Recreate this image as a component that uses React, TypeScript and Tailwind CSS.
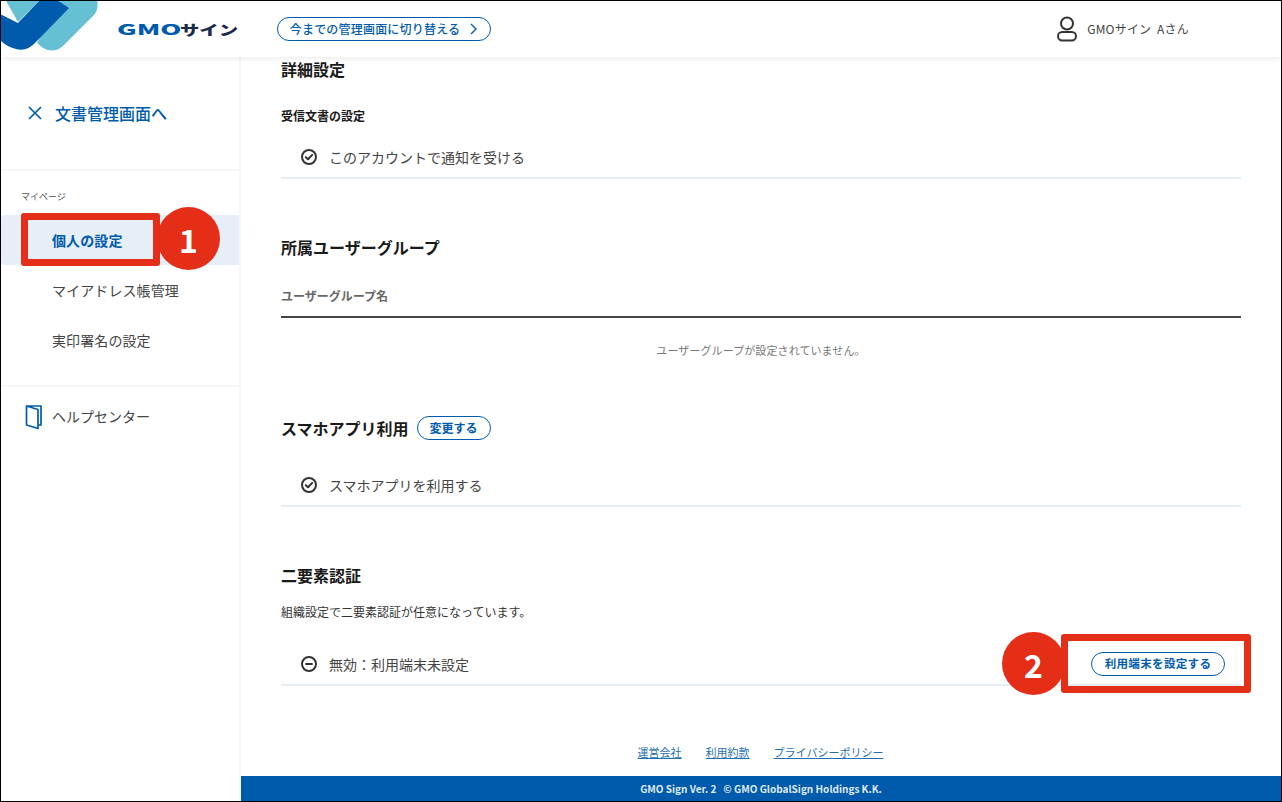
import React from "react";

const JP = "font-['Noto_Sans_CJK_JP','Noto_Sans',sans-serif]";

const CheckCircle = () => (
  <svg width="18" height="18" viewBox="0 0 18 18" fill="none" stroke="#333" strokeWidth="2">
    <circle cx="9" cy="9" r="7" />
    <path d="M5.8 9.2 8 11.3 12.2 6.9" strokeLinecap="round" strokeLinejoin="round" />
  </svg>
);

const MinusCircle = () => (
  <svg width="18" height="18" viewBox="0 0 18 18" fill="none" stroke="#333" strokeWidth="2">
    <circle cx="9" cy="9" r="7" />
    <path d="M5.3 9h7.4" />
  </svg>
);

const StatusRow = ({ icon, text, children }: { icon: React.ReactNode; text: string; children?: React.ReactNode }) => (
  <div className="flex h-[42px] items-center border-b-2 border-[#e6eef5] pl-[19px]">
    {icon}
    <span className="ml-[11px] text-[14px] text-[#444]">{text}</span>
    {children}
  </div>
);

const Pill = ({ children, className }: { children: React.ReactNode; className?: string }) => (
  <button className={`flex items-center justify-center rounded-full border border-[#005bac] bg-white text-[#005bac] ${className}`}>
    {children}
  </button>
);

const Badge = ({ n, className }: { n: number; className: string }) => (
  <div className={`absolute flex h-[63px] w-[63px] items-center justify-center rounded-full bg-[#e42e18] text-[32px] font-bold text-white ${className}`}>
    {n}
  </div>
);

export default function App() {
  return (
    <div className={`relative flex h-[802px] w-[1282px] flex-col overflow-hidden border border-black bg-white ${JP}`}>
      {/* Header */}
      <header className="relative z-10 flex h-[56px] shrink-0 items-center bg-white shadow-[0_2px_6px_rgba(0,0,0,0.07)]">
        <svg className="absolute left-0 top-0" width="100" height="52" viewBox="0 0 100 52">
          <path d="M4 -2 17 21 40 -2Z" fill="#66c0d4" />
          <path d="M60 -2H96Q98 8 93 14L62 45Q53 53 42 47L36 42Z" fill="#66c0d4" />
          <path d="M-1 13 17 22 39 -1H56L68 7 35 41Q26 51 15 48 6 46 -1 39Z" fill="#005bac" />
        </svg>
        <div className="ml-[116px] flex w-[122px] whitespace-nowrap text-[14px] font-black leading-none">
          <span className="w-[63px] origin-left scale-x-[1.92] text-[#005bac]">GMO</span>
          <span className="w-[59px] origin-left scale-x-[1.38] text-[#1c2a4a]">サイン</span>
        </div>
        <Pill className="ml-[38px] h-[24px] w-[214px] gap-[9px] text-[12px] font-medium tracking-[0.2px]">
          今までの管理画面に切り替える
          <svg width="9" height="12" viewBox="0 0 9 12" fill="none" stroke="#005bac" strokeWidth="1.4">
            <path d="M2 1l5 5-5 5" />
          </svg>
        </Pill>
        <div className="ml-auto mr-[92px] flex items-center">
          <svg width="22" height="26" viewBox="0 0 22 26" fill="none" stroke="#333" strokeWidth="2">
            <circle cx="11" cy="7.5" r="6" />
            <rect x="2" y="16" width="18" height="8.5" rx="4.2" />
          </svg>
          <span className="ml-[9px] whitespace-pre text-[12px] tracking-[0.2px] text-[#444]">GMOサイン  Aさん</span>
        </div>
      </header>

      <div className="flex min-h-0 flex-1">
        {/* Sidebar */}
        <aside className="flex w-[240px] shrink-0 flex-col border-r-2 border-[#f5f6f8]">
          <div className="flex h-[114px] shrink-0 items-center border-b-2 border-[#f5f6f8] pl-[26px] pb-[1px]">
            <svg width="16" height="16" viewBox="0 0 16 16" fill="none" stroke="#005bac" strokeWidth="1.7">
              <path d="M2 2l12 12M14 2 2 14" />
            </svg>
            <span className="ml-[12px] text-[16px] font-medium text-[#005bac]">文書管理画面へ</span>
          </div>
          <div className="mt-[19px] pl-[20px] text-[9px] leading-[14px] text-[#555]">マイページ</div>
          <nav className="mt-[11px] flex flex-col text-[14px] tracking-[0.1px] text-[#444]">
            <div className="flex h-[50px] items-center bg-[#e6eff7] pl-[51px] font-bold text-[#005bac]">個人の設定</div>
            <div className="flex h-[50px] items-center pl-[51px]">マイアドレス帳管理</div>
            <div className="flex h-[50px] items-center pl-[51px]">実印署名の設定</div>
          </nav>
          <div className="mt-[20px] flex h-[61px] items-center border-t-2 border-[#f5f6f8] pl-[24px] text-[14px] text-[#444]">
            <svg width="18" height="26" viewBox="0 0 18 26" fill="none" stroke="#005bac" strokeWidth="1.7" strokeLinejoin="round">
              <path d="M1.5 2H16V21H13M1.5 2V21L13 24.5V5.5L1.5 2Z" />
            </svg>
            <span className="ml-[9px]">ヘルプセンター</span>
          </div>
        </aside>

        {/* Main */}
        <main className="flex min-w-0 flex-1 flex-col">
          <div className="flex flex-1 flex-col pl-[40px] pr-[40px]">
            <h2 className="mt-[1px] text-[16px] font-bold leading-[22px] text-[#1a1a1a]">詳細設定</h2>
            <h3 className="mt-[27px] text-[12px] font-bold leading-[18px] text-[#1a1a1a]">受信文書の設定</h3>
            <div className="mt-[12px]">
              <StatusRow icon={<CheckCircle />} text="このアカウントで通知を受ける" />
            </div>

            <h2 className="mt-[57px] text-[16px] font-bold leading-[22px] text-[#1a1a1a]">所属ユーザーグループ</h2>
            <div className="mt-[17px] flex h-[43px] items-center border-b-2 border-[#444] text-[12px] font-bold text-[#666]">
              ユーザーグループ名
            </div>
            <div className="mt-[24px] text-center text-[11px] leading-[16px] tracking-[0.1px] text-[#777]">
              ユーザーグループが設定されていません。
            </div>

            <div className="mt-[58px] flex h-[24px] items-center">
              <h2 className="text-[16px] font-bold text-[#1a1a1a]">スマホアプリ利用</h2>
              <Pill className="ml-[8px] h-[24px] w-[74px] text-[12px] font-bold">変更する</Pill>
            </div>
            <div className="mt-[25px]">
              <StatusRow icon={<CheckCircle />} text="スマホアプリを利用する" />
            </div>

            <h2 className="mt-[57px] text-[16px] font-bold leading-[22px] text-[#1a1a1a]">二要素認証</h2>
            <p className="mt-[17px] text-[12px] leading-[18px] text-[#333]">組織設定で二要素認証が任意になっています。</p>
            <div className="mt-[23px]">
              <StatusRow icon={<MinusCircle />} text="無効：利用端末未設定">
                <Pill className="ml-auto mr-[16px] h-[24px] w-[134px] text-[11.5px] font-bold tracking-[0.35px]">利用端末を設定する</Pill>
              </StatusRow>
            </div>

            <div className="mt-auto mb-[16px] flex justify-center gap-[24px] pr-[1px] text-[11px] leading-[16px] text-[#1f6fb5] underline">
              <span>運営会社</span>
              <span>利用約款</span>
              <span>プライバシーポリシー</span>
            </div>
          </div>
          <footer className="flex h-[25px] shrink-0 items-center justify-center whitespace-pre bg-[#005bac] pb-[1px] text-[10px] font-bold text-[#dfe9f3]">
            GMO Sign Ver. 2{"   "}© GMO GlobalSign Holdings K.K.
          </footer>
        </main>
      </div>

      {/* Annotations */}
      <div className="absolute left-[20px] top-[212px] h-[53px] w-[139px] rounded-[3px] border-[7px] border-[#e42e18]" />
      <Badge n={1} className="left-[156px] top-[206px]" />
      <div className="absolute left-[1060px] top-[633px] h-[59px] w-[190px] rounded-[3px] border-[7px] border-[#e42e18]" />
      <Badge n={2} className="left-[1001px] top-[631px]" />
    </div>
  );
}
